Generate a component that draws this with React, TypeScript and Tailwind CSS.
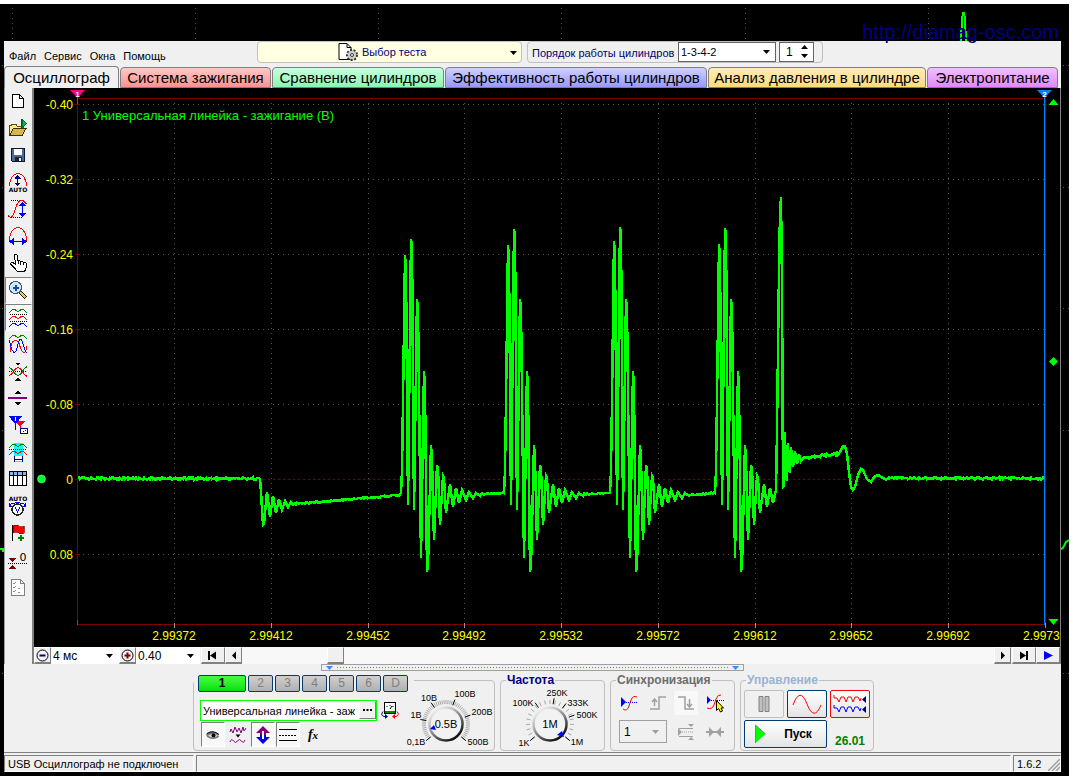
import React from "react";

type Point = [number, number];

/* ------------------------------------------------------------------ */
/* Signal                                                              */
/* ------------------------------------------------------------------ */

function noise(x: number): number {
  const v = Math.sin(x * 12.9898) * 43758.5453;
  return v - Math.floor(v) - 0.5;
}

function flat(x1: number, y1: number, x2: number, y2: number, amp: number): Point[] {
  const pts: Point[] = [];
  for (let x = x1; x <= x2; x += 1) {
    const t = (x - x1) / (x2 - x1);
    pts.push([x, y1 + (y2 - y1) * t + noise(x) * amp]);
  }
  return pts;
}

const BURST_TAIL: Point[] = [
  [16, 299], [17, 309], [20, 558], [23, 371], [24, 390], [26, 572], [27, 566], [30, 445], [31, 460],
  [33, 540], [36, 465], [37, 468], [39, 525], [42, 476], [43, 478], [45, 513], [49, 484], [52, 507],
  [55, 488], [58, 503], [61, 490], [65, 500], [68, 492], [72, 498], [75, 493], [79, 496],
];

function burst(x: number, p1: number, p2: number): Point[] {
  const head: Point[] = [
    [0, 493], [1, 470], [2, 400], [4, p1], [5, p1 + 15], [7, 505], [10, p2], [11, p2 + 6], [13, 510],
  ];
  return [...head, ...BURST_TAIL].map(([dx, y]): Point => [x + dx, y]);
}

function buildSignal(): Point[] {
  return [
    ...flat(78, 478.5, 259, 478.5, 2.4),
    [260, 479], [261, 492], [263, 525], [264, 524], [267, 492], [270, 517], [273, 496], [276, 513],
    [279, 499], [282, 510], [285, 501], [288, 507], [291, 502],
    ...flat(293, 504, 400, 495, 1.6),
    ...burst(401, 255, 239),
    ...flat(481, 494, 503, 493, 1.6),
    ...burst(504, 245, 229),
    ...flat(584, 494, 609, 493, 1.6),
    ...burst(610, 241, 227),
    ...flat(690, 495, 714, 493, 1.6),
    ...burst(715, 244, 228).slice(0, 29),
    [776, 490], [777, 430], [779, 270], [780, 213], [781, 197],
    [782, 285], [783, 487], [784, 486], [785, 432], [786, 478], [787, 481], [788, 443], [789, 470],
    [790, 473], [791, 447], [793, 467], [795, 451], [797, 464], [799, 454], [801, 461],
    ...flat(803, 458, 838, 454, 2.4),
    [840, 452], [843, 446], [845, 446], [847, 454], [849, 472], [851, 487], [853, 490], [855, 487],
    [858, 475], [861, 469], [863, 470], [867, 479], [871, 482], [874, 477], [878, 475], [883, 478],
    [886, 480],
    ...flat(889, 478, 1044, 478.5, 2.4),
  ];
}

const SIGNAL = buildSignal().map((p) => p.join(",")).join(" ");

const X_TICKS = [174, 271, 368, 464, 561, 658, 755, 851, 948];
const X_LABELS = ["2.99372", "2.99412", "2.99452", "2.99492", "2.99532", "2.99572", "2.99612", "2.99652", "2.99692"];
const Y_TICKS: [number, string][] = [
  [104, "-0.40"], [179, "-0.32"], [254, "-0.24"], [329, "-0.16"], [404, "-0.08"], [479, "0"], [554, "0.08"],
];

function Plot() {
  return (
    <svg viewBox="34 88 1026 559" className="block h-auto w-full bg-black font-['Liberation_Sans',sans-serif]" role="img" aria-label="Осциллограмма">
      <g shapeRendering="crispEdges" fill="none">
        {Y_TICKS.filter(([y]) => y !== 479).map(([y]) => (
          <path key={y} d={`M78 ${y + 0.5}H1044`} stroke="#555" strokeDasharray="1 4" />
        ))}
        {X_TICKS.map((x) => (
          <path key={x} d={`M${x + 0.5} 103V622`} stroke="#555" strokeDasharray="1 4" />
        ))}
        <path d="M78 479.5H1044" stroke="#800000" strokeDasharray="2 3" />
        <path d="M77.5 98V624.5H1045.500V98.500H77" stroke="#800000" />
        {Y_TICKS.map(([y]) => (
          <path key={y} d={`M75 ${y + 0.5}h5`} stroke="#800000" />
        ))}
        {X_TICKS.concat(1045).map((x) => (
          <path key={x} d={`M${x + 0.5} 623v5`} stroke="#999" />
        ))}
        <polyline points={SIGNAL} stroke="#00ff00" strokeWidth="2.500" />
        <path d="M77.500 97V104M77.500 620V625" stroke="#ff0090" />
        <path d="M1044.500 97V625" stroke="#0080ff" />
      </g>
      <path d="M70 90h15l-7.500 8z" fill="#ff0090" />
      <path d="M1037 90h15l-7.500 8z" fill="#0080ff" />
      <text x="77.500" y="97" fontSize="8" fontWeight="700" fill="#fff" textAnchor="middle">1</text>
      <text x="1044.500" y="97" fontSize="8" fontWeight="700" fill="#fff" textAnchor="middle">2</text>
      <circle cx="41.500" cy="479" r="4" fill="#00ff30" stroke="#9f9" strokeWidth="0.500" />
      <g fill="#00ff00">
        <path d="M1053.500 99l5 6h-10z" />
        <path d="M1053.500 357l4.500 4.500-4.500 4.500-4.500-4.500z" />
        <path d="M1048.500 619h10l-5 6z" />
      </g>
      <text x="82" y="120" fontSize="13" fill="#00ff00">1 Универсальная линейка - зажигание (В)</text>
      <g fontSize="12" fill="#ffff00">
        {Y_TICKS.map(([y, label]) => (
          <text key={label} x="73" y={y + 5} textAnchor="end">{label}</text>
        ))}
        {X_TICKS.map((x, i) => (
          <text key={x} x={x} y="640" textAnchor="middle">{X_LABELS[i]}</text>
        ))}
        <text x="1023" y="640">2.9973</text>
      </g>
    </svg>
  );
}

/* ------------------------------------------------------------------ */
/* Left tool bar                                                       */
/* ------------------------------------------------------------------ */

const WAVE = "c2 0 2.500-3.500 4.500-3.500s2.500 2.500 4.500 2.500 2.500-2.500 4.500-2.500 2.500 3.500 4.500 3.500";

const TOOLS: { name: string; pressed?: boolean; icon: React.ReactNode }[] = [
  {
    name: "Новый",
    icon: <path d="M7.500 6.500h7l4 4v9h-11zM14.500 6.500v4h4" fill="#fff" stroke="#000" />,
  },
  {
    name: "Открыть",
    icon: (
      <>
        <path d="M4.500 20.500v-10h1.500l1-1h4l1 1.500h6v3" fill="#ffe98a" stroke="#5a4a10" />
        <path d="M4.500 20.500l4-7h12.500l-4 7z" fill="#d8b64a" stroke="#3a3008" />
        <path d="M16.500 4v9" stroke="#053" />
        <path d="M17 4l5 4.500-5 4z" fill="#00c030" stroke="#053" strokeWidth="0.700" />
      </>
    ),
  },
  {
    name: "Сохранить",
    icon: (
      <>
        <path d="M6.500 6.500h13v13h-12l-1-1z" fill="#4a6a9a" stroke="#101830" />
        <path d="M9 7h8v6h-8z" fill="#fff" />
        <path d="M9.500 15h7v4h-7z" fill="#222" />
        <path d="M13.500 16h2v3h-2z" fill="#eee" />
      </>
    ),
  },
  {
    name: "Автомасштаб",
    icon: (
      <>
        <path d="M4.500 17c0-7 4-12.500 8.500-12.500s8.500 5.500 8.500 12.500" fill="none" stroke="#f00" />
        <path d="M12.500 7v9" stroke="#000080" />
        <path d="M9.500 9.500l3-4 3 4zM9.500 13.500l3 4 3-4z" fill="#000080" />
        <text x="13" y="23" fontSize="6" fontWeight="700" textAnchor="middle">AUTO</text>
      </>
    ),
  },
  {
    name: "Масштаб по вертикали",
    icon: (
      <>
        <path d="M6 4.500h9M6 21.500h11" stroke="#000" strokeDasharray="1 1" />
        <path d="M3 19.500q3 4 5.500-1l3-9q3-7 7-4.500l3 3" fill="none" stroke="#f00" />
        <path d="M17.500 8v10" stroke="#00f" strokeWidth="1.500" />
        <path d="M14 10l3.500-4.500 3.500 4.500zM14 17l3.500 4.500 3.500-4.500z" fill="#00f" />
      </>
    ),
  },
  {
    name: "Масштаб по горизонтали",
    icon: (
      <>
        <path d="M4.500 17.500v-3c1-5 4-10 8.500-10s7.500 5 8.500 10v3" fill="none" stroke="#f00" />
        <path d="M7 18.500h12" stroke="#00f" strokeWidth="1.500" />
        <path d="M4 18.500l5-3.500v7zM22 18.500l-5-3.500v7z" fill="#00f" />
      </>
    ),
  },
  {
    name: "Рука",
    icon: (
      <path
        d="M9.500 5q1.500-2 2.500 0l1 6 1.500-.5 1 1.500 1.500-1 1.500 1.500 1.500-.5 1.500 1.500-.5 5-1.500 3h-7l-2.500-3-4.500-4.500q0-1.500 2-1.500l3 1.500zM13 11v3M15.500 11.500v3M18.500 12v3"
        fill="#fff"
        stroke="#000"
      />
    ),
  },
  {
    name: "Лупа",
    pressed: true,
    icon: (
      <>
        <path d="M14 14l7 7" stroke="#222" strokeWidth="3.500" />
        <path d="M15 15l5.500 5.500" stroke="#e8c860" strokeWidth="1.500" />
        <circle cx="10.500" cy="10.500" r="6" fill="#cfe6ff" stroke="#456" strokeWidth="1.200" />
        <path d="M10.500 7.500v6M7.500 10.500h6" stroke="#124a9a" strokeWidth="2" />
      </>
    ),
  },
  {
    name: "Раздельно",
    pressed: true,
    icon: (
      <>
        <path d={`M4 8.500${WAVE}`} fill="none" stroke="#008000" />
        <path d="M5 10.500h17M5 17.500h17" stroke="#000" strokeDasharray="1 1" />
        <path d={`M4 15.500${WAVE}`} fill="none" stroke="#f00" />
        <path d={`M4 22.500${WAVE}`} fill="none" stroke="#00f" />
      </>
    ),
  },
  {
    name: "Совместно",
    icon: (
      <>
        <path d={`M4 7.500${WAVE}`} fill="none" stroke="#008000" />
        <path d="M5 21.500q1-12 5-12t5 6q2 6 4 6t3-6" fill="none" stroke="#f00" />
        <path d="M4.500 9.500c1 4 2 12 5 12s3-13.500 6-13.500 3 13 6 13" fill="none" stroke="#00f" />
      </>
    ),
  },
  {
    name: "Совместить нули",
    icon: (
      <>
        <path d="M10 4.500h6l-3 3zM10 22.500h6l-3-3z" fill="#000" />
        <path d="M4 13.500h18" stroke="#000" strokeDasharray="1 1" />
        <path d="M4 9.500q2 0 4 3 3 5 5 5t5-5 4-3" fill="none" stroke="#008000" />
        <path d="M4 17.500q2 0 4-3 3-5 5-5t5 5 4 3" fill="none" stroke="#f00" />
      </>
    ),
  },
  {
    name: "Разделить",
    icon: (
      <>
        <path d="M10 9h6l-3-3.500zM10 17h6l-3 3.500z" fill="#000" />
        <path d="M3 13h19" stroke="#800080" strokeWidth="2" />
      </>
    ),
  },
  {
    name: "Маркеры",
    icon: (
      <>
        <path d="M9 8.500h12l-6 6z" fill="#f00" />
        <path d="M15 10v10" stroke="#f00" />
        <path d="M4 4h13l-5 7h-3z" fill="#00f" />
        <path d="M10.500 8v10" stroke="#00f" />
        <path d="M10.500 5v4" stroke="#fff" />
        <rect x="15.500" y="16.500" width="7" height="5" fill="#fff" stroke="#000080" />
        <path d="M17.500 19.500h1M19.500 18.500h1" stroke="#000080" />
      </>
    ),
  },
  {
    name: "Область между маркерами",
    icon: (
      <>
        <path d="M9 4h9v19h-9z" fill="#00ffff" />
        <path d={`M4 8.500${WAVE}`} fill="none" stroke="#008000" />
        <path d="M4 10.500h18" stroke="#000" strokeDasharray="1 1" />
        <path d={`M4 15.500${WAVE}`} fill="none" stroke="#f00" />
        <path d="M10 17h7v5h-7z" fill="#fff" />
        <path d="M9.500 17v6M17.500 17v6M10 20.500h7" stroke="#000080" />
      </>
    ),
  },
  {
    name: "Таблица",
    icon: (
      <>
        <rect x="4.500" y="5.500" width="17" height="14" fill="#fff" stroke="#000" />
        <path d="M5 6h16v3h-16z" fill="#8ab4e8" />
        <path d="M5 9.500h16M8.500 6v13M12.500 6v13M17.500 6v13" stroke="#000" />
      </>
    ),
  },
  {
    name: "Автоизмерение",
    icon: (
      <>
        <text x="13" y="8" fontSize="6" fontWeight="700" textAnchor="middle">AUTO</text>
        <circle cx="12.500" cy="16.500" r="5.500" fill="#fff" stroke="#222" strokeWidth="1.500" />
        <path d="M5 11.500q7.500-3.500 15 0" fill="none" stroke="#00f" />
        <path d="M4 9.500v4h3zM21 9.500v4h-3z" fill="#00f" />
        <path d="M10 14l2.500 5 2.500-5" fill="none" stroke="#00f" />
      </>
    ),
  },
  {
    name: "Добавить метку",
    icon: (
      <>
        <path d="M7.500 5v16" stroke="#000" />
        <path d="M8 6q3-2 5.500 0t5.500 0v7q-3 2-5.500 0t-5.500 0z" fill="#f00" stroke="#800" strokeWidth="0.700" />
        <path d="M16 15v6M13 18h6" stroke="#008000" strokeWidth="2" />
      </>
    ),
  },
  {
    name: "Установить ноль",
    icon: (
      <>
        <text x="18" y="14" fontSize="11" textAnchor="middle">0</text>
        <path d="M4 11h7l-3.500 4.500zM4 22h7l-3.500-4.500z" fill="#800000" />
        <path d="M3 16.500h19" stroke="#000" strokeDasharray="1 1" />
      </>
    ),
  },
  {
    name: "Список",
    icon: (
      <>
        <path d="M6.500 5.500h9l4 4v12h-13zM15.500 5.500v4h4" fill="#fff" stroke="#808080" />
        <path d="M8 9l1 1 2-2M8 13l1 1 2-2M8 17l1 1 2-2M13 14.500h2M13 18.500h2" fill="none" stroke="#909090" />
      </>
    ),
  },
];

function ToolBar() {
  return (
    <div className="flex w-[30px] shrink-0 flex-col border-r-2 border-l border-l-[#a0a0a0] border-r-[#808080] bg-[#f0f0f0]">
      {TOOLS.map((t) => (
        <button
          key={t.name}
          type="button"
          aria-label={t.name}
          className={
            t.pressed
              ? "h-[27px] w-[27px] border border-white border-t-[#808080] border-l-[#808080] bg-[#f8f8f8]"
              : "h-[27px] w-[27px] border border-transparent"
          }
        >
          <svg viewBox="1 1 25 25" width="25" height="25" shapeRendering="crispEdges" className="block font-['DejaVu_Sans',sans-serif]">
            {t.icon}
          </svg>
        </button>
      ))}
    </div>
  );
}

/* ------------------------------------------------------------------ */
/* Menu and tabs                                                       */
/* ------------------------------------------------------------------ */

const Arrow = ({ className }: { className: string }) => (
  <svg viewBox="0 0 7 4" width="7" height="4" className={className} aria-hidden="true">
    <path d="M0 0h7L3.500 4z" fill="currentColor" />
  </svg>
);

function MenuBar() {
  return (
    <div className="flex h-[25px] bg-[#f0f0f0]">
      <nav className="flex w-[253px] shrink-0 items-start gap-2 pt-[9px] pl-[5px] text-[11px] leading-3 text-black">
        {["Файл", "Сервис", "Окна", "Помощь"].map((m) => (
          <button key={m} type="button">{m}</button>
        ))}
      </nav>
      <button
        type="button"
        className="relative flex h-[22px] w-[265px] items-center rounded-sm border border-[#c0c0c0] bg-[#ffffe1] pl-[80px] text-[11px] text-[#000080]"
      >
        <svg viewBox="0 0 22 20" width="22" height="20" className="mr-0.5" aria-hidden="true">
          <path d="M1 1.500h8l4 4v12h-12z" fill="#fff" stroke="#000" />
          <path d="M9 1.500v4h4" fill="none" stroke="#000" />
          <circle cx="14" cy="13" r="5" fill="#ccc" stroke="#333" strokeWidth="2" strokeDasharray="2 1.500" />
          <circle cx="14" cy="13" r="4" fill="#ccc" />
          <circle cx="14" cy="13" r="1.500" fill="#fff" stroke="#333" />
        </svg>
        Выбор теста
        <Arrow className="absolute top-[9px] right-1 text-black" />
      </button>
      <div className="ml-[5px] flex h-[22px] rounded-sm border border-[#c0c0c0] pr-[8px] pl-1 text-[12px]">
        <label htmlFor="order" className="w-[146px] text-[11px] leading-[22px] whitespace-nowrap text-[#000080]">Порядок работы цилиндров</label>
        <span className="relative">
          <select id="order" className="block h-[20px] w-[98px] appearance-none border border-[#646464] bg-white pl-[2px] text-[11px] leading-4 text-black">
            <option>1-3-4-2</option>
          </select>
          <Arrow className="pointer-events-none absolute top-2 right-[6px] text-black" />
        </span>
        <span className="relative ml-[3px]">
          <input
            type="number"
            aria-label="Цилиндр"
            defaultValue={1}
            className="block h-[20px] w-[35px] appearance-none border border-[#646464] bg-white pl-[6px] text-[12px] leading-4 text-black [appearance:textfield]"
          />
          <svg viewBox="0 0 7 13" width="7" height="13" className="pointer-events-none absolute top-[3px] right-[6px]" aria-hidden="true">
            <path d="M0 4h7L3.500 0zM0 9h7l-3.500 4z" fill="#000" />
          </svg>
        </span>
      </div>
    </div>
  );
}

const TABS: [string, string][] = [
  ["Система зажигания", "w-[151px] from-[#ffc8c8] to-[#ff9090]"],
  ["Сравнение цилиндров", "w-[172px] from-[#c8ffe0] to-[#88f8b0]"],
  ["Эффективность работы цилиндров", "w-[262px] from-[#d0d0ff] to-[#9898ff]"],
  ["Анализ давления в цилиндре", "w-[218px] from-[#ffecb8] to-[#ffdc78]"],
  ["Электропитание", "w-[131px] from-[#f0c0ff] to-[#e088ff]"],
];

function Tabs() {
  return (
    <div role="tablist" className="flex h-[22px] items-end gap-px overflow-hidden bg-[#f0f0f0] text-[15px] leading-5 whitespace-nowrap text-black">
      <button type="button" role="tab" aria-selected="true" className="h-[22px] w-[115px] rounded-t border border-b-0 border-[#808080] bg-[#f0f0f0] leading-5">
        Осциллограф
      </button>
      {TABS.map(([label, look]) => (
        <button key={label} type="button" role="tab" aria-selected="false" className={"h-[21px] rounded-t border border-[#808080] bg-linear-to-b leading-5 " + look}>
          {label}
        </button>
      ))}
    </div>
  );
}

/* ------------------------------------------------------------------ */
/* Scroll row                                                          */
/* ------------------------------------------------------------------ */

const BEVEL = "flex h-[17px] shrink-0 items-center justify-center border border-b-2 border-white border-r-[#808080] border-b-[#808080] bg-[#f0f0f0]";

function ScaleButton({ plus }: { plus?: boolean }) {
  return (
    <button type="button" aria-label={plus ? "Увеличить" : "Уменьшить"} className={BEVEL + " w-[17px]"}>
      <svg viewBox="0 0 13 13" width="13" height="13">
        <circle cx="6.500" cy="6.500" r="5.500" fill="none" stroke="#000" />
        {plus ? (
          <path d="M3.500 6.500h6M6.500 3.500v6" stroke="#800000" strokeWidth="2" />
        ) : (
          <path d="M3.500 6.500h6" stroke="#000080" strokeWidth="2" />
        )}
      </svg>
    </button>
  );
}

function ScaleSelect({ label, value, look }: { label: string; value: string; look: string }) {
  return (
    <span className={"relative " + look}>
      <select aria-label={label} className="block h-[17px] w-full appearance-none bg-white pl-[2px] text-[12px] leading-4 text-black">
        <option>{value}</option>
      </select>
      <Arrow className="pointer-events-none absolute top-[7px] right-[6px] text-black" />
    </span>
  );
}

function ScrollButton({ label, look, d, blue }: { label: string; look: string; d: string; blue?: boolean }) {
  return (
    <button type="button" aria-label={label} className={BEVEL + " " + look}>
      <svg viewBox="0 0 12 9" width="12" height="9">
        <path d={d} fill={blue ? "#0000ff" : "#000"} />
      </svg>
    </button>
  );
}

function ScrollRow() {
  return (
    <div className="flex h-[17px] bg-[#f0f0f0]">
      <ScaleButton />
      <ScaleSelect label="Время" value="4 мс" look="w-[68px]" />
      <ScaleButton plus />
      <ScaleSelect label="Чувствительность" value="0.40" look="w-[64px]" />
      <ScrollButton label="В начало" look="ml-px w-6" d="M1 0h2v9h-2zM3 4.500L9 .500v8z" />
      <ScrollButton label="Назад" look="w-[17px]" d="M4 4.500L8 .500v8z" />
      <input
        type="range"
        aria-label="Прокрутка"
        min={0}
        max={1000}
        defaultValue={115}
        className="h-[17px] min-w-0 flex-1 appearance-none bg-[#f8f8f8] [&::-webkit-slider-thumb]:h-[17px] [&::-webkit-slider-thumb]:w-[17px] [&::-webkit-slider-thumb]:appearance-none [&::-webkit-slider-thumb]:border [&::-webkit-slider-thumb]:border-b-2 [&::-webkit-slider-thumb]:border-white [&::-webkit-slider-thumb]:border-r-[#808080] [&::-webkit-slider-thumb]:border-b-[#808080] [&::-webkit-slider-thumb]:bg-[#f0f0f0]"
      />
      <ScrollButton label="Вперёд" look="w-[17px]" d="M4 .500v8l4-4z" />
      <ScrollButton label="В конец" look="ml-px w-6" d="M2 .500v8l6-4zM8 0h2v9h-2z" />
      <ScrollButton label="Воспроизвести" look="w-6" d="M2 0v9l9-4.500z" blue />
    </div>
  );
}

/* ------------------------------------------------------------------ */
/* Bottom panels                                                       */
/* ------------------------------------------------------------------ */

function polar(cx: number, cy: number, r: number, deg: number): string {
  const a = (deg * Math.PI) / 180;
  return `${(cx + r * Math.cos(a)).toFixed(1)} ${(cy + r * Math.sin(a)).toFixed(1)}`;
}

interface KnobProps {
  id: string;
  box: string;
  width: number;
  height: number;
  cx: number;
  value: string;
  pointer: string;
  step: number;
  major: number[];
  labels: [string, number, number][];
}

function Knob({ id, box, width, height, cx, value, pointer, step, major, labels }: KnobProps) {
  const cy = 724;
  const minor: number[] = [];
  for (let a = 140; a <= 400; a += step) minor.push(a);
  return (
    <svg viewBox={box} width={width} height={height} className="block shrink-0 font-['Liberation_Sans',sans-serif]" role="img" aria-label={value}>
      <defs>
        <linearGradient id={id} x1="0.100" y1="0" x2="0.800" y2="1">
          <stop offset="0" stopColor="#fff" />
          <stop offset="0.350" stopColor="#b8b8b8" />
          <stop offset="1" stopColor="#000" />
        </linearGradient>
      </defs>
      {minor.map((a) => (
        <path key={a} d={`M${polar(cx, cy, 20, a)}L${polar(cx, cy, 24, a)}`} stroke="#a8a8a8" />
      ))}
      {major.map((a) => (
        <path key={a} d={`M${polar(cx, cy, 20, a)}L${polar(cx, cy, 26, a)}`} stroke="#000" />
      ))}
      <circle cx={cx} cy={cy} r="16.500" fill="#f2f2f2" stroke={`url(#${id})`} strokeWidth="2.500" />
      <path d={pointer} fill="#0000ff" />
      <text x={cx} y="728" fontSize="11" textAnchor="middle" fill="#000">{value}</text>
      <g fontSize="9" fill="#000">
        {labels.map(([t, x, y]) => (
          <text key={t} x={x} y={y + 3} textAnchor="middle">{t}</text>
        ))}
      </g>
    </svg>
  );
}

const SMALL_BTN = "flex h-[25px] w-6 items-center justify-center border ";
const SUNK = "border-white border-t-[#808080] border-l-[#808080] bg-[#f8f8f8]";

function ChannelPanel() {
  return (
    <div className="pt-[5px]">
      <div role="group" aria-label="Каналы" className="flex h-[71px] w-[302px] rounded border border-[#c0c0c0]">
        <div className="z-10 w-[211px] shrink-0">
          <div className="-mt-[6px] flex h-[17px] w-[220px] gap-[2px] bg-[#f0f0f0] pl-1 text-[12px]">
            <button type="button" className="w-12 rounded-xs border border-[#003c74] bg-linear-to-b from-[#40ff40] to-[#00e000] leading-[15px] font-bold text-black">1</button>
            {["2", "3", "4", "5", "6", "D"].map((c) => (
              <button key={c} type="button" className="w-[25px] rounded-xs border border-[#003c74] bg-linear-to-b from-[#d0d0d0] to-[#b0b0b0] leading-[15px] text-[#808080]">
                {c}
              </button>
            ))}
          </div>
          <div className="mt-2 ml-[6px] flex h-[21px]">
            <div className="flex w-[177px] border border-[#00ff00] bg-white">
              <input
                aria-label="Название датчика"
                defaultValue="Универсальная линейка - зажигание"
                className="mr-1 min-w-0 flex-1 pl-[2px] text-[11px] leading-4 text-black"
              />
              <button type="button" aria-label="Выбрать датчик" className="flex h-[18px] w-[17px] items-center justify-center border border-white border-r-[#808080] border-b-[#808080] bg-[#f0f0f0]">
                <svg viewBox="0 0 9 2" width="9" height="2"><path d="M0 0h2v2H0zM3.500 0h2v2h-2zM7 0h2v2H7z" /></svg>
              </button>
            </div>
            <button type="button" aria-label="Инвертировать" className="ml-1">
              <svg viewBox="0 0 19 19" width="19" height="19" fill="none">
                <rect x="3.500" y="1.500" width="11" height="11" fill="#fff" stroke="#000" />
                <path d="M4 10h10v2H4z" fill="#080" />
                <path d="M5.500 6l1-1M8.500 4.500h1M11.500 5l1 1M9 8l2-3" stroke="#000" />
                <path d="M2 10.500q-3 3.500 1 5h2" stroke="#000080" />
                <path d="M4 13v5l3-2.500z" fill="#000080" />
                <path d="M16 10.500q3 3.500-1 5h-2" stroke="#f00" />
                <path d="M14 13v5l-3-2.500z" fill="#f00" />
              </svg>
            </button>
          </div>
          <div className="mt-px ml-[7px] flex gap-px">
            <button type="button" aria-label="Видимость" className={SMALL_BTN + SUNK}>
              <svg viewBox="0 0 14 10" width="14" height="10">
                <path d="M0 4q6-5 12 0l1 3q-6 4-12 0z" fill="#777" />
                <path d="M2 5.500q5-3 10 0q-5 4-10 0z" fill="#ddd" />
                <path d="M1 3.500q6-4 12 1" fill="none" stroke="#000" />
                <circle cx="7.500" cy="5.500" r="2" />
              </svg>
            </button>
            <button type="button" aria-label="Фильтр" className={SMALL_BTN + "border-transparent"}>
              <svg viewBox="0 0 18 18" width="18" height="18" fill="none" stroke="#800080">
                <path d="M1 6l1-3 2 4 2-6 2 5 2-4 2 5 2-6 1 4 2-3" />
                <path d="M6.500 8.500h5l-2.500 3z" fill="#000" stroke="none" />
                <path d="M1 16q1.500-4 3.500-1t4 0 4 0 3.500-1" />
              </svg>
            </button>
            <button type="button" aria-label="Инверсия" className={SMALL_BTN + SUNK}>
              <svg viewBox="0 0 16 18" width="16" height="18">
                <path d="M8 0l7 7h-4v2H5V7H1z" fill="#800080" />
                <path d="M8 18l7-7h-4V9H5v2H1z" fill="#0000ff" />
                <path d="M8 5v8" stroke="#fff" strokeWidth="2" />
              </svg>
            </button>
            <button type="button" aria-label="Связь по входу" className={SMALL_BTN + SUNK}>
              <svg viewBox="0 0 18 14" width="18" height="14" shapeRendering="crispEdges" stroke="#000">
                <path d="M0 1.500h18M0 12.500h18" />
                <path d="M0 7.500h18" strokeDasharray="2 1" />
              </svg>
            </button>
            <button type="button" aria-label="Функция" className={SMALL_BTN + "border-transparent font-['Liberation_Serif',serif] text-[14px] font-bold text-black italic"}>
              <span>f<span className="text-[11px]">x</span></span>
            </button>
          </div>
        </div>
        <Knob
          id="ring-volt"
          box="405 681 89 69"
          width={89}
          height={69}
          cx={446}
          value="0.5В"
          pointer="M430 729l4-4 2 5z"
          step={5}
          major={[140, 190, 235, 290, 340, 400]}
          labels={[["10В", 429, 698], ["100В", 465, 694], ["200В", 482, 712], ["1В", 416, 715], ["0,1В", 416, 742], ["500В", 478, 742]]}
        />
      </div>
    </div>
  );
}

const FIELDSET = "h-[76px] min-w-0 rounded border border-[#c0c0c0] ";
const LEGEND = "ml-[5px] px-px text-[12px] leading-[11px] font-bold ";
const SYNC_BTN = "flex h-6 w-6 items-center justify-center";
const CTRL_BTN = "flex h-7 items-center justify-center rounded-xs border bg-linear-to-b from-white to-[#e4e4e4] ";

const ZIG = "M1 1v3h3l2 4 2-5h3l2 5 2-5h3l2 5 2-5h3l2 4 1-3";

function Panels() {
  return (
    <div className="flex flex-wrap justify-center gap-[5px] bg-[#f0f0f0] pt-1 pb-px pl-[2px]">
      <ChannelPanel />
      <fieldset className={FIELDSET + "w-[105px]"}>
        <legend className={LEGEND + "text-[#000080]"}>Частота</legend>
        <Knob
          id="ring-freq"
          box="501 686 103 64"
          width={103}
          height={64}
          cx={550}
          value="1М"
          pointer="M557 735l5-4 2 6z"
          step={13}
          major={[140, 235, 279, 308, 340, 400]}
          labels={[["250K", 557, 693], ["100K", 523, 703], ["333K", 578, 703], ["500K", 587, 715], ["1K", 524, 743], ["1M", 577, 742]]}
        />
      </fieldset>
      <fieldset className={FIELDSET + "w-[125px]"}>
        <legend className={LEGEND + "text-[#6d6d6d]"}>Синхронизация</legend>
        <div className="grid w-[115px] grid-cols-4 gap-x-[5px] gap-y-[5px] pt-[5px] pl-[6px]">
          <button type="button" aria-label="Режим" className={SYNC_BTN}>
            <svg viewBox="0 0 18 18" width="18" height="18" fill="none">
              <path d="M1 3v10l5-5z" fill="#00f" />
              <path d="M4 8.500h14" stroke="#00f" strokeDasharray="1 1" />
              <path d="M3 15q4 3 6-3l2-6q2-5 6-3" stroke="#f00" />
            </svg>
          </button>
          <button type="button" aria-label="Фронт" disabled className={SYNC_BTN}>
            <svg viewBox="0 0 18 16" width="18" height="16" fill="none" stroke="#a0a0a0" strokeWidth="1.500">
              <path d="M1 14h9V2h7M5.500 11V4M3 7l2.500-3L8 7" />
            </svg>
          </button>
          <button type="button" aria-label="Спад" disabled className={SYNC_BTN + " bg-[#f8f8f8]"}>
            <svg viewBox="0 0 18 16" width="18" height="16" fill="none" stroke="#a0a0a0" strokeWidth="1.500">
              <path d="M1 2h7v12h9M12.500 4v8M10 9l2.500 3L15 9" />
            </svg>
          </button>
          <button type="button" aria-label="Уровень" className={SYNC_BTN}>
            <svg viewBox="0 0 20 20" width="20" height="20" fill="none">
              <path d="M2 3v8l4-4z" fill="#00f" />
              <path d="M4 7.500h16" stroke="#00f" strokeDasharray="1 1" />
              <path d="M2 15q5 2 7-3l2-6q2-5 5-4" stroke="#f00" />
              <path d="M11.500 7.500v10l2-2 2 3.500 2-1-1.500-3h2.500z" fill="#ff0" stroke="#000" />
            </svg>
          </button>
          <span className="relative col-span-2 ml-[2px]">
            <select aria-label="Канал синхронизации" className="block h-[23px] w-12 appearance-none border border-[#a0a0a0] bg-[#f0f0f0] pl-1 text-[12px] text-black">
              <option>1</option>
            </select>
            <Arrow className="pointer-events-none absolute top-[10px] left-[33px] text-[#a0a0a0]" />
          </span>
          <button type="button" aria-label="Порог" disabled className={SYNC_BTN}>
            <svg viewBox="0 0 18 18" width="18" height="18" fill="#a0a0a0" stroke="#a0a0a0">
              <path d="M1 5v8l4-4zM11 1h6l-3 3zM11 17h6l-3-3z" stroke="none" />
              <path d="M2 5.500h14M2 13.500h14" />
              <path d="M5 9h12" strokeDasharray="1 1" />
            </svg>
          </button>
          <button type="button" aria-label="Центр" disabled className={SYNC_BTN}>
            <svg viewBox="0 0 18 10" width="18" height="10" fill="#a0a0a0" stroke="#a0a0a0">
              <path d="M3 0v10l5-5zM15 0v10l-5-5z" stroke="none" />
              <path d="M0 5h18" strokeWidth="2" />
            </svg>
          </button>
        </div>
      </fieldset>
      <fieldset className={FIELDSET + "w-[134px]"}>
        <legend className={LEGEND + "text-[#99b4d1]"}>Управление</legend>
        <div className="grid grid-cols-3 gap-x-[3px] gap-y-[2px] px-[3px] pt-1">
          <button type="button" aria-label="Пауза" disabled className="flex h-7 items-center justify-center rounded-xs border border-[#c0c0c0] bg-[#f0f0f0]">
            <svg viewBox="0 0 12 16" width="12" height="16" fill="#c0c0c0" stroke="#808080">
              <path d="M1 .500h4v15H1zM7 .500h4v15H7z" />
            </svg>
          </button>
          <button type="button" aria-label="Одиночный" className={CTRL_BTN + "border-[#003c74]"}>
            <svg viewBox="0 0 30 20" width="30" height="20" fill="none" stroke="#f00">
              <path d="M1 11Q8-8 15 10T29 11" />
            </svg>
          </button>
          <button type="button" aria-label="Непрерывный" className={CTRL_BTN + "border-[#ff0000]"}>
            <svg viewBox="0 0 34 20" width="34" height="20" fill="none">
              <path d={ZIG} stroke="#f00" />
              <path d={ZIG} stroke="#00f" transform="translate(0 10)" />
              <path d="M33 2v7l-4-3.500zM33 12v7l-4-3.500z" fill="#000080" />
            </svg>
          </button>
          <button type="button" className={CTRL_BTN + "col-span-2 gap-[18px] border-[#003c74] pr-1 text-[12px] font-bold text-black"}>
            <svg viewBox="0 0 11 20" width="11" height="20">
              <path d="M.500 1v18l10-9z" fill="#00ff00" />
              <path d="M.500 19V1l10 9" fill="none" stroke="#808080" />
            </svg>
            Пуск
          </button>
          <output className="pt-[13px] text-center text-[12px] leading-4 font-bold text-[#008000]">26.01</output>
        </div>
      </fieldset>
    </div>
  );
}

/* ------------------------------------------------------------------ */
/* Window                                                              */
/* ------------------------------------------------------------------ */

function StatusBar() {
  const cell = "border border-white border-t-[#808080] border-l-[#808080] pl-[3px] ";
  return (
    <footer className="flex h-5 gap-[2px] border-t border-[#808080] bg-[#f0f0f0] pt-[2px] text-[11px] leading-4 text-black">
      <div className={cell + "w-[190px] whitespace-nowrap"}>USB Осциллограф не подключен</div>
      <div className={cell + "flex-1"} />
      <div className={cell + "relative w-12"}>
        1.6.2
        <svg viewBox="0 0 12 12" width="12" height="12" className="absolute right-0 bottom-0" stroke="#a0a0a0" strokeWidth="1.500">
          <path d="M0 12L12 0M4 12l8-8M8 12l4-4" />
        </svg>
      </div>
    </footer>
  );
}

function Backdrop() {
  return (
    <svg viewBox="0 4 1069 37" className="block h-auto w-full" shapeRendering="crispEdges" fill="none" aria-hidden="true">
      {[12, 195, 378, 561, 745, 928].map((x) => (
        <path key={x} d={`M${x + 0.5} 8V41`} stroke="#555" strokeDasharray="1 4" />
      ))}
      <path d="M961 41l1-22 1-6h1l1 6 1 22" stroke="#00ff00" strokeWidth="2" />
    </svg>
  );
}

function Gutter({ box, look, trace }: { box: string; look: string; trace: string }) {
  return (
    <svg viewBox={box} preserveAspectRatio="xMidYMin meet" className={"shrink-0 " + look} fill="none" aria-hidden="true">
      {[65, 187, 308, 430, 673].map((y) => (
        <path key={y} d={`M2 ${y + 0.5}h6`} stroke="#555" strokeDasharray="1 4" />
      ))}
      <path d={trace} stroke="#00ff00" strokeWidth="2" />
    </svg>
  );
}

export default function App() {
  return (
    <div className="min-h-screen bg-white pt-1 pr-1 font-['Liberation_Sans',sans-serif]">
      <div className="relative bg-black pb-1">
        <Backdrop />
        <a href="http://diamag-osc.com" className="absolute top-[16px] right-[10px] z-10 text-[20px] leading-6 text-[#000080]">
          http://diamag-osc.com
        </a>
        <div className="flex">
          <Gutter box="0 41 4 731" look="w-1" trace="M0 549h3v3" />
          <main className="min-w-0 flex-1 bg-[#f0f0f0]">
            <MenuBar />
            <Tabs />
            <div className="flex border-r border-[#808080]">
              <ToolBar />
              <div className="min-w-0 flex-1">
                <Plot />
                <ScrollRow />
              </div>
            </div>
            <button type="button" aria-label="Свернуть панель" className="mx-auto flex h-[7px] w-[423px] items-center gap-1 border border-[#a0a0a0] px-1 text-[#3090ff]">
              <Arrow className="shrink-0" />
              <span className="h-px flex-1 bg-[repeating-linear-gradient(90deg,#3090ff_0_1px,transparent_1px_3px)]" />
              <Arrow className="shrink-0" />
            </button>
            <Panels />
            <StatusBar />
          </main>
          <Gutter box="0 41 8 731" look="w-2" trace="M0 549l2-1 3-6 3-2" />
        </div>
      </div>
    </div>
  );
}
